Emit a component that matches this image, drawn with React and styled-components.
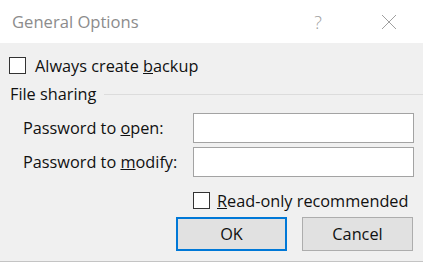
import React from "react";
import styled, { createGlobalStyle } from "styled-components";

const Global = createGlobalStyle`
  html, body { margin: 0; padding: 0; background: #fff; }
  body { font-family: "Open Sans", "Noto Sans", sans-serif; }
`;

const Dialog = styled.div`
  width: 423px;
  height: 265px;
  display: flex;
  flex-direction: column;
  background: #fff;
`;

const TitleBar = styled.div`
  height: 43px;
  display: flex;
  align-items: center;
  padding-left: 12px;
  box-sizing: border-box;
`;

const Title = styled.div`
  flex: 1;
  font-size: 16.6px;
  color: #8c8c8c;
  margin-top: -1px;
`;

const TitleButton = styled.div`
  width: ${(p) => p.w}px;
  display: flex;
  justify-content: center;
  align-items: center;
  color: #a0a0a0;
  font-size: 18px;
  font-weight: 300;
`;

const Body = styled.div`
  height: 219px;
  background: #f0f0f0;
  border-bottom: 1px solid #c4c4c4;
  box-sizing: border-box;
  padding: 14px 10px 0 9px;
  display: flex;
  flex-direction: column;
  font-size: 16.3px;
  color: #111;
`;

const CheckRow = styled.label`
  display: flex;
  align-items: center;
  gap: ${(p) => p.gap || 9}px;
  height: 17px;
  margin-left: ${(p) => p.indent || 0}px;
  margin-top: ${(p) => p.top || 0}px;
`;

const Box = styled.span`
  width: 17px;
  height: 17px;
  box-sizing: border-box;
  border: 1px solid #333;
  background: #fff;
  flex: none;
`;

const GroupHeader = styled.div`
  display: flex;
  align-items: center;
  gap: 8px;
  height: 18px;
  margin-top: 11px;
  padding-left: 1px;

  &::after {
    content: "";
    flex: 1;
    height: 1px;
    background: #dcdcdc;
    margin-right: -10px;
  }
`;

const Fields = styled.div`
  display: grid;
  grid-template-columns: 184px 221px;
  row-gap: 4px;
  margin-top: 10px;
  align-items: center;
`;

const FieldLabel = styled.div`
  padding-left: 14px;
`;

const Input = styled.div`
  height: 30px;
  box-sizing: border-box;
  border: 1px solid #a3a3a3;
  background: #fff;
`;

const Buttons = styled.div`
  display: flex;
  justify-content: flex-end;
  gap: 15px;
  margin-top: 8px;
`;

const Button = styled.div`
  width: 111px;
  height: 34px;
  box-sizing: border-box;
  background: #e1e1e1;
  border: ${(p) => (p.primary ? "2px solid #0078d7" : "1px solid #adadad")};
  display: flex;
  align-items: center;
  justify-content: center;
`;

export default function App() {
  return (
    <Dialog>
      <Global />
      <TitleBar>
        <Title>General Options</Title>
        <TitleButton w={36}>?</TitleButton>
        <TitleButton w={36} style={{ marginLeft: 35, marginRight: 16 }}>
          <svg width="16" height="16" viewBox="0 0 16 16">
            <path d="M1 1L15 15M15 1L1 15" stroke="#a0a0a0" strokeWidth="1" fill="none" />
          </svg>
        </TitleButton>
      </TitleBar>
      <Body>
        <CheckRow>
          <Box />
          <span>Always create <u>b</u>ackup</span>
        </CheckRow>
        <GroupHeader>File sharing</GroupHeader>
        <Fields>
          <FieldLabel>Password to <u>o</u>pen:</FieldLabel>
          <Input />
          <FieldLabel>Password to <u>m</u>odify:</FieldLabel>
          <Input />
        </Fields>
        <CheckRow indent={184} top={15} gap={7}>
          <Box />
          <span><u>R</u>ead-only recommended</span>
        </CheckRow>
        <Buttons>
          <Button primary>OK</Button>
          <Button>Cancel</Button>
        </Buttons>
      </Body>
    </Dialog>
  );
}
